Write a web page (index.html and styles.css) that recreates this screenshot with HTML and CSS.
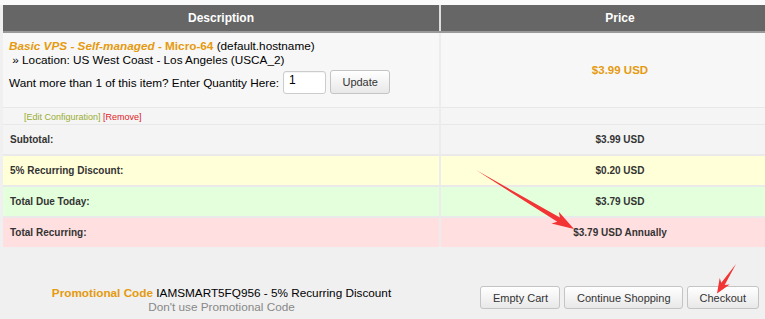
FILE: index.html
```html
<!DOCTYPE html>
<html lang="en">
<head>
  <meta charset="UTF-8">
  <meta name="viewport" content="width=device-width, initial-scale=1.0">
  <title>Shopping Cart</title>
  <link rel="stylesheet" href="styles.css">
</head>
<body>
  <div class="cart">
    <!-- Cart table -->
    <table class="cart-table">
      <colgroup>
        <col class="col-desc">
        <col class="col-price">
      </colgroup>
      <thead>
        <tr>
          <th>Description</th>
          <th class="price-col">Price</th>
        </tr>
      </thead>
      <tbody>
        <tr class="product-row">
          <td>
            <div class="product-title"><strong><em>Basic VPS - Self-managed</em> - Micro-64</strong> (default.hostname)</div>
            <div>&nbsp;&raquo; Location: US West Coast - Los Angeles (USCA_2)</div>
            <div class="qty-line">
              Want more than 1 of this item? Enter Quantity Here:
              <input type="text" class="qty-input" value="1">
              <button class="btn">Update</button>
            </div>
          </td>
          <td class="price-col product-price">$3.99 USD</td>
        </tr>
        <tr class="edit-row">
          <td><a href="#" class="edit-link">[Edit Configuration]</a> <a href="#" class="remove-link">[Remove]</a></td>
          <td class="price-col"></td>
        </tr>
        <tr class="total-row subtotal">
          <td>Subtotal:</td>
          <td class="price-col">$3.99 USD</td>
        </tr>
        <tr class="total-row discount">
          <td>5% Recurring Discount:</td>
          <td class="price-col">$0.20 USD</td>
        </tr>
        <tr class="total-row due-today">
          <td>Total Due Today:</td>
          <td class="price-col">$3.79 USD</td>
        </tr>
        <tr class="total-row recurring">
          <td>Total Recurring:</td>
          <td class="price-col">$3.79 USD Annually</td>
        </tr>
      </tbody>
    </table>

    <!-- Promo code and actions -->
    <div class="cart-footer">
      <div class="promo">
        <div><strong class="promo-label">Promotional Code</strong> IAMSMART5FQ956 - 5% Recurring Discount</div>
        <div><a href="#" class="promo-remove">Don't use Promotional Code</a></div>
      </div>
      <div class="actions">
        <button class="btn">Empty Cart</button>
        <button class="btn">Continue Shopping</button>
        <button class="btn">Checkout</button>
      </div>
    </div>
  </div>

  <!-- Red arrows drawn over the screenshot -->
  <svg class="annotations" width="765" height="319" viewBox="0 0 765 319">
    <polygon points="476,170 559.9,217.6 558.8,211.7 574,229 551.5,223.6 557.3,221.8"/>
    <polygon points="736,264 721.3,282.7 719.7,278 717,293.5 729.7,284.6 724.7,284.9"/>
  </svg>
</body>
</html>
```

FILE: styles.css
```css
/* Basic page */
body {
  margin: 0;
  font-family: "Liberation Sans", Arial, sans-serif;
  font-size: 12px;
  color: #000;
  background-color: #f0f0f0;
  overflow: hidden;
  width: 765px;
  height: 319px;
  position: relative;
}
.cart {
  width: 796px;
  padding-left: 3px;
  border-top: 5px solid #fafafa;
}

/* Table */
.cart-table {
  width: 796px;
  border-collapse: collapse;
  table-layout: fixed;
}
.col-desc {
  width: 437px;
}
.col-price {
  width: 359px;
}
.cart-table th {
  height: 26px;
  padding: 0;
  background-color: #666;
  color: #fff;
  font-size: 12px;
  font-weight: bold;
  border-bottom: 2px solid #999;
}
.cart-table th.price-col {
  border-left: 2px solid #ddd;
}
.cart-table td {
  padding: 0;
}
.cart-table td.price-col {
  border-left: 2px solid #ececec;
  text-align: center;
}

.product-row td {
  background-color: #f7f7f7;
  padding: 6px 6px 13px;
  font-size: 11.75px;
  line-height: 14px;
  border-bottom: 1px solid #e8e8e8;
  vertical-align: top;
}
.product-row td.product-price {
  vertical-align: middle;
  padding: 0;
  color: #e59a0f;
  font-weight: bold;
  font-size: 11.5px;
}
.product-title strong {
  color: #e59a0f;
}
.qty-line {
  display: flex;
  align-items: center;
  gap: 4px;
  margin-top: 2px;
  padding-top: 2px;
}
.qty-input {
  width: 43px;
  height: 23px;
  box-sizing: border-box;
  border: 1px solid #ccc;
  border-radius: 3px;
  padding: 0 5px 6px;
  font-family: inherit;
  font-size: 12px;
  background: #fff;
  box-shadow: inset 0 1px 1px rgba(0, 0, 0, 0.05);
}

.edit-row td {
  height: 17px;
  background-color: #f5f5f5;
  border-bottom: 1px solid #e8e8e8;
  font-size: 9px;
  padding-left: 21px;
  padding-top: 2px;
  box-sizing: border-box;
}
.edit-row td.price-col {
  padding: 0;
}
.edit-link {
  color: #99ad33;
  text-decoration: none;
}
.remove-link {
  color: #e0202a;
  text-decoration: none;
}

.total-row td {
  height: 29px;
  font-size: 10px;
  font-weight: bold;
  color: #333;
  padding-left: 7px;
  border-bottom: 2px solid #eaeaea;
}
.total-row td.price-col {
  padding: 0;
}
.total-row.recurring td {
  border-bottom: none;
}
.subtotal td {
  background-color: #f4f4f4;
}
.discount td {
  background-color: #ffffd8;
}
.due-today td {
  background-color: #e3ffdb;
}
.recurring td {
  background-color: #ffdfdf;
}

/* Footer */
.cart-footer {
  display: grid;
  grid-template-columns: 437px 359px;
  padding-top: 39px;
}
.promo {
  text-align: center;
  font-size: 11.75px;
  line-height: 14px;
}
.promo-label {
  color: #e59a0f;
}
.promo-remove {
  color: #888;
  text-decoration: none;
}
.actions {
  display: flex;
  justify-content: center;
  gap: 4px;
}

/* Buttons */
.btn {
  height: 23px;
  padding: 0 11.5px;
  border: 1px solid #c4c4c4;
  border-radius: 3px;
  background: linear-gradient(#fff, #e8e8e8);
  color: #333;
  font-family: inherit;
  font-size: 11px;
  cursor: pointer;
}
.qty-line .btn {
  height: 24px;
  margin-top: -1px;
}

/* Annotations */
.annotations {
  position: absolute;
  left: 0;
  top: 0;
  pointer-events: none;
}
.annotations polygon {
  fill: #f23434;
}
```
